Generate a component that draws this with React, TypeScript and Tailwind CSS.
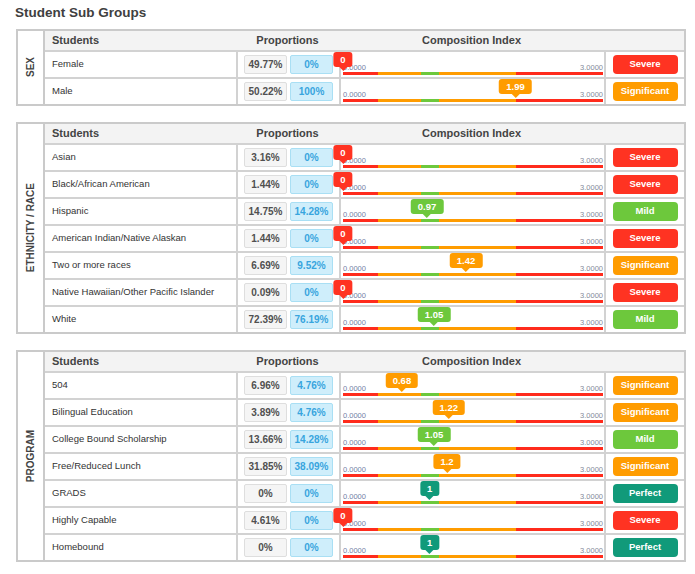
import React from 'react';

type Status = 'Severe' | 'Significant' | 'Mild' | 'Perfect';

type Row = {
  name: string;
  share: string;
  target: string;
  index: number;
  label: string;
  status: Status;
};

const STATUS: Record<Status, { bg: string; tri: string }> = {
  Severe: { bg: 'bg-[#ff3322]', tri: 'border-t-[#ff3322]' },
  Significant: { bg: 'bg-[#ff9c00]', tri: 'border-t-[#ff9c00]' },
  Mild: { bg: 'bg-[#6dc83c]', tri: 'border-t-[#6dc83c]' },
  Perfect: { bg: 'bg-[#119a7a]', tri: 'border-t-[#119a7a]' },
};

const GROUPS: { title: string; rows: Row[] }[] = [
  {
    title: 'SEX',
    rows: [
      { name: 'Female', share: '49.77%', target: '0%', index: 0, label: '0', status: 'Severe' },
      { name: 'Male', share: '50.22%', target: '100%', index: 1.99, label: '1.99', status: 'Significant' },
    ],
  },
  {
    title: 'ETHNICITY / RACE',
    rows: [
      { name: 'Asian', share: '3.16%', target: '0%', index: 0, label: '0', status: 'Severe' },
      { name: 'Black/African American', share: '1.44%', target: '0%', index: 0, label: '0', status: 'Severe' },
      { name: 'Hispanic', share: '14.75%', target: '14.28%', index: 0.97, label: '0.97', status: 'Mild' },
      { name: 'American Indian/Native Alaskan', share: '1.44%', target: '0%', index: 0, label: '0', status: 'Severe' },
      { name: 'Two or more races', share: '6.69%', target: '9.52%', index: 1.42, label: '1.42', status: 'Significant' },
      { name: 'Native Hawaiian/Other Pacific Islander', share: '0.09%', target: '0%', index: 0, label: '0', status: 'Severe' },
      { name: 'White', share: '72.39%', target: '76.19%', index: 1.05, label: '1.05', status: 'Mild' },
    ],
  },
  {
    title: 'PROGRAM',
    rows: [
      { name: '504', share: '6.96%', target: '4.76%', index: 0.68, label: '0.68', status: 'Significant' },
      { name: 'Bilingual Education', share: '3.89%', target: '4.76%', index: 1.22, label: '1.22', status: 'Significant' },
      { name: 'College Bound Scholarship', share: '13.66%', target: '14.28%', index: 1.05, label: '1.05', status: 'Mild' },
      { name: 'Free/Reduced Lunch', share: '31.85%', target: '38.09%', index: 1.2, label: '1.2', status: 'Significant' },
      { name: 'GRADS', share: '0%', target: '0%', index: 1, label: '1', status: 'Perfect' },
      { name: 'Highly Capable', share: '4.61%', target: '0%', index: 0, label: '0', status: 'Severe' },
      { name: 'Homebound', share: '0%', target: '0%', index: 1, label: '1', status: 'Perfect' },
    ],
  },
];

const COLS = 'grid grid-cols-[191px_103px_265px_80px]';

export default function App() {
  return (
    <div className="min-h-[574px] bg-white pt-[5px] font-['Liberation_Sans',Arial,sans-serif] text-[#333]">
      <h1 className="pl-[15px] text-[13.5px] font-bold leading-[16px] text-[#404040]">Student Sub Groups</h1>
      <div className="mt-[8px] flex flex-col gap-[16px] pl-[16px]">
        {GROUPS.map((g) => (
          <Group key={g.title} title={g.title} rows={g.rows} />
        ))}
      </div>
    </div>
  );
}

function Group({ title, rows }: { title: string; rows: Row[] }) {
  return (
    <section className="flex w-[670px] border-2 border-[#cacaca]">
      <div className="flex w-[27px] shrink-0 items-center justify-center border-r-2 border-[#cacaca]">
        <span className="rotate-180 whitespace-nowrap text-[10px] font-bold text-[#444] [writing-mode:vertical-rl]">
          {title}
        </span>
      </div>
      <div className="flex-1">
        <div className={`${COLS} h-[19px] bg-[#f3f3f3] text-[11px] font-bold leading-[19px] text-[#444]`}>
          <div className="pl-[7px]">Students</div>
          <div className="text-center">Proportions</div>
          <div className="text-center">Composition Index</div>
          <div />
        </div>
        {rows.map((r) => (
          <RowLine key={r.name} row={r} />
        ))}
      </div>
    </section>
  );
}

function RowLine({ row }: { row: Row }) {
  const s = STATUS[row.status];
  return (
    <div className={`${COLS} h-[27px] border-t-2 border-[#d2d2d2]`}>
      <div className="flex items-center pl-[7px] text-[9.5px] text-[#333]">{row.name}</div>
      <div className="flex items-center gap-[3px] border-l-2 border-[#d2d2d2] pl-[6px] text-[10px] font-bold">
        <span className="flex h-[19px] w-[43px] items-center justify-center rounded-[2px] border border-[#dedede] bg-[#f5f5f5] text-[#505050]">
          {row.share}
        </span>
        <span className="flex h-[19px] w-[43px] items-center justify-center rounded-[2px] border border-[#a9dff4] bg-[#cfeefb] text-[#38a5de]">
          {row.target}
        </span>
      </div>
      <div className="border-l-2 border-[#d2d2d2] pb-[2px] pl-[2px]">
        <div className="relative flex h-full w-[260px] flex-col justify-end">
          <div className="flex justify-between text-[7.5px] leading-[8px]">
            <span className="text-[#7480a6]">0.0000</span>
            <span className="text-[#858a99]">3.0000</span>
          </div>
          <div className="flex h-[3px]">
            <div className="w-[35px] bg-[#ff2b1c]" />
            <div className="w-[43px] bg-[#ff9c00]" />
            <div className="w-[18px] bg-[#6dc83c]" />
            <div className="w-[77px] bg-[#ff9c00]" />
            <div className="w-[87px] bg-[#ff2b1c]" />
          </div>
          <div
            className="absolute top-0 flex -translate-x-1/2 flex-col items-center"
            style={{ left: `${(row.index / 3) * 100}%` }}
          >
            <span
              className={`h-[15px] min-w-[18px] rounded-[3px] px-[7px] text-center text-[9.5px] font-bold leading-[15px] text-white ${s.bg}`}
            >
              {row.label}
            </span>
            <span
              className={`h-0 w-0 border-x-[4px] border-t-[4px] border-x-transparent ${s.tri}`}
            />
          </div>
        </div>
      </div>
      <div className="flex items-center justify-center border-l-2 border-[#d2d2d2]">
        <span
          className={`flex h-[19px] w-[65px] items-center justify-center rounded-[4px] text-[9.5px] font-bold text-white ${s.bg}`}
        >
          {row.status}
        </span>
      </div>
    </div>
  );
}
